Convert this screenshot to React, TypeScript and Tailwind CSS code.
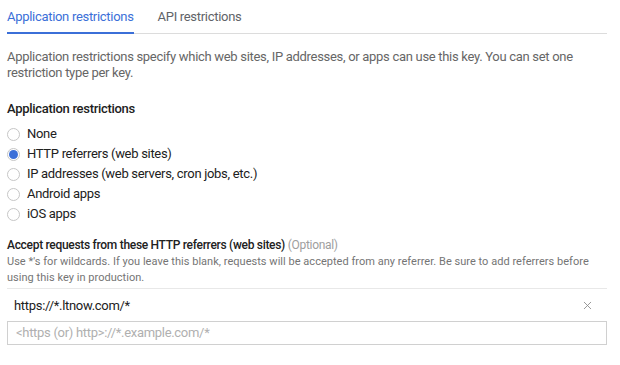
import { X } from 'lucide-react';

const options = [
  'None',
  'HTTP referrers (web sites)',
  'IP addresses (web servers, cron jobs, etc.)',
  'Android apps',
  'iOS apps',
];

function Radio({ checked }: { checked: boolean }) {
  return (
    <span className="flex h-[13px] w-[13px] items-center justify-center rounded-full border border-[#c6c6c6] bg-white">
      {checked && <span className="h-[9px] w-[9px] rounded-full bg-[#3b6fd8]" />}
    </span>
  );
}

export default function App() {
  return (
    <div className="min-h-screen w-[620px] bg-white pl-[7px] pr-[13px] font-['Roboto',sans-serif] tracking-[-0.3px] text-[#212121]">
      {/* Tabs */}
      <div className="flex h-[34px] items-end border-b border-[#dcdcdc]">
        <div className="-mb-px border-b-2 border-[#3b6fd8] pb-[7px] text-[13px] leading-[16px] text-[#3b6fd8]">
          Application restrictions
        </div>
        <div className="ml-6 pb-[8px] text-[13px] leading-[16px] text-[#5f6368]">API restrictions</div>
      </div>

      <p className="mt-[15px] text-[13px] leading-[16px] text-[#666]">
        Application restrictions specify which web sites, IP addresses, or apps can use this key. You can set one
        restriction type per key.
      </p>

      <h3 className="mt-[20px] text-[13px] font-medium leading-[16px] text-[#212121]">Application restrictions</h3>

      <div className="mt-[7px] flex flex-col">
        {options.map((o, i) => (
          <label key={o} className="flex h-[20px] items-center gap-[7px] text-[13px] text-[#212121]">
            <Radio checked={i === 1} />
            {o}
          </label>
        ))}
      </div>

      {/* Referrers */}
      <div className="mt-[13px] text-[12px] leading-[16px]">
        <span className="font-medium text-[#212121]">Accept requests from these HTTP referrers (web sites)</span>{' '}
        <span className="text-[#9e9e9e]">(Optional)</span>
      </div>
      <p className="mt-[1px] text-[11px] leading-[16px] tracking-[0.03px] text-[#757575]">
        Use *'s for wildcards. If you leave this blank, requests will be accepted from any referrer. Be sure to add referrers before
        using this key in production.
      </p>

      <div className="mt-[2px] flex h-[32px] items-center justify-between border-t border-[#e8e8e8] pl-[7px] pr-[13px] pt-[2px]">
        <span className="text-[13px] text-[#212121]">https://*.ltnow.com/*</span>
        <X className="h-[13px] w-[13px] text-[#8a8a8a]" strokeWidth={1.6} />
      </div>

      <input
        className="h-[24px] w-full border border-[#d0d0d0] px-[8px] text-[13px] tracking-[-0.3px] outline-none placeholder:text-[#b0b0b0]"
        placeholder="<https (or) http>://*.example.com/*"
      />
    </div>
  );
}
